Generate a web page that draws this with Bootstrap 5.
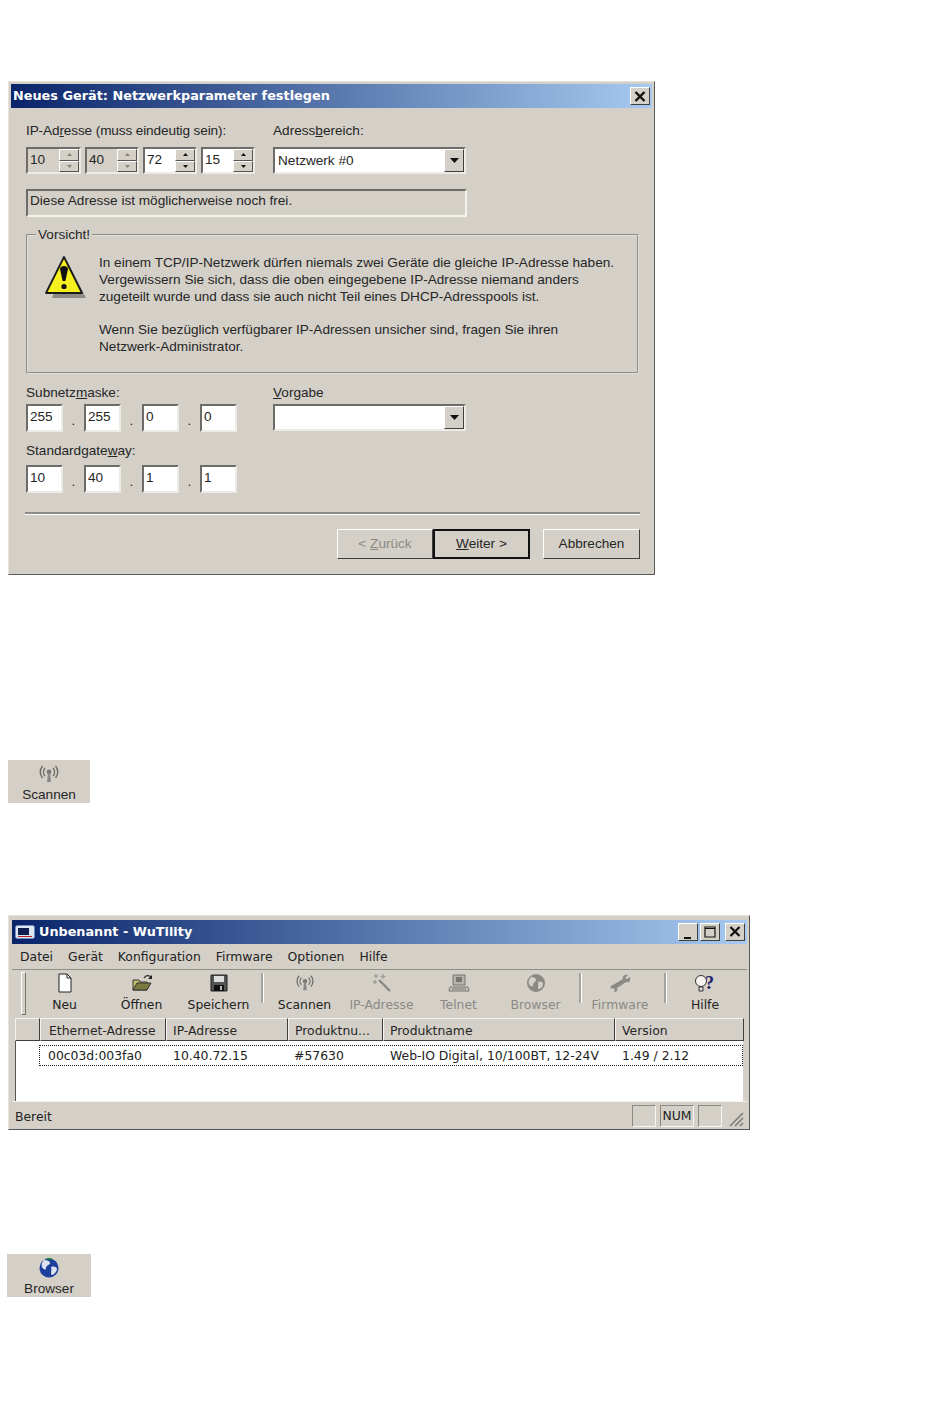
<!DOCTYPE html>
<html lang="de">
<head>
<meta charset="utf-8">
<title>WuTility</title>
<link href="https://cdn.jsdelivr.net/npm/bootstrap@5.3.0/dist/css/bootstrap.min.css" rel="stylesheet">
<style>
body{margin:0;background:#fff;color:#262626;font-family:"Liberation Sans",Arial,sans-serif;font-size:13.6px;line-height:16px}
.sheet{width:950px;height:1402px;overflow:hidden;padding-top:81px}
u{text-decoration:underline}
.dlg{margin-left:8px;width:647px;height:494px;background:#d4d0c8;border:1px solid;border-color:#e6e3dc #5a5a5a #5a5a5a #e6e3dc;padding:2px 2px 0 2px}
.ttl{height:24px;background:linear-gradient(90deg,#0a246a,#a6caf0);color:#fff;font-family:"DejaVu Sans",sans-serif;font-weight:700;font-size:12.85px;padding:0 2px}
.winbtn{width:20px;height:18px;background:#d4d0c8;border:1px solid;border-color:#fff #404040 #404040 #fff;color:#111;flex:none}
.dlgbody{padding:15px 0 0 15px}
.lblcol{width:247px}
.iplbl{letter-spacing:-.12px}
.sp-box{height:27px;background:#fff;border:2px solid;border-color:#6e6c68 #ecebe6 #ecebe6 #6e6c68;padding-left:2px;line-height:21px}
.sp-box.off{background:#d4d0c8}
.ipw{width:55px}.ipx{width:54px}
.ipgap{gap:4px}
.spin{width:20px;height:23px;flex:none}
.spin i{display:flex;align-items:center;justify-content:center;height:11.5px;background:#d4d0c8;border:1px solid;border-color:#fff #555 #555 #fff}
.spin svg{display:block}
.combo{height:27px;background:#fff;border:2px solid;border-color:#6e6c68 #ecebe6 #ecebe6 #6e6c68;width:193px;padding-left:3px;line-height:23px}
.drop{width:20px;height:23px;background:#d4d0c8;border:1px solid;border-color:#fff #404040 #404040 #fff;flex:none}
.stat{margin-top:15px;width:441px;height:28px;border:2px solid;border-color:#6e6c68 #f2f1ec #f2f1ec #6e6c68;padding-left:2px;line-height:20px}
.grp{margin:10px 0 0 0;width:613px;height:147px;border:2px groove #e2e0d9;padding:0;min-width:0}
.grp legend{float:none;width:auto;margin:0 0 0 8px;padding:0 2px;font-size:13.6px;line-height:16px}
.warn{width:71px;padding:12px 0 0 16px;flex:none}
.warntext{padding-top:11px;line-height:17px}
.warntext p{margin:0 0 16px}
.subrow{margin-top:11px}
.tiny{width:37px;height:28px;background:#fff;border:2px solid;border-color:#6e6c68 #ecebe6 #ecebe6 #6e6c68;padding-left:2px;line-height:21px}
.dot{width:21px;height:28px;text-align:center;line-height:34px}
.gap3{margin-top:3px}
.gwlbl{margin-top:11px}
.gwrow{margin-top:6px}
.hr2{height:2px;background:#8d8b86;border-bottom:1px solid #fff;width:615px;margin:19px 0 0 -1px;box-sizing:content-box}
.wb{height:30px;padding:0;font-size:13.6px;line-height:16px;color:#262626;background:#d4d0c8;border:1px solid;border-color:#fff #404040 #404040 #fff;border-radius:0;width:97px}
.wb.dis{color:#8b8984;width:96px}
.wb.def{border:2px solid #111;width:97px}
.btnrow{margin:14px 0 0 311px;width:303px}
.tile{background:#d4d0c8;height:43px;text-align:center;font-size:13.6px;padding-top:3px}
.tile>div{margin-top:2px}
.t1{width:82px;margin:185px 0 0 8px}
.t2{width:84px;margin:0 0 0 7px}
.app{margin:112px 0 124px 8px;width:742px;height:215px;background:#d4d0c8;border:1px solid;border-color:#e6e3dc #555 #555 #e6e3dc;padding:4px 2px 0 3px;font-family:"DejaVu Sans",sans-serif;font-size:12.4px}
.apptl{height:24px;background:linear-gradient(90deg,#0a246a,#a6caf0);color:#fff;font-weight:700;font-size:12.8px;padding:0 2px 0 3px}
.tbtns{gap:2px}
.closeb{margin-left:3px}
.menu{height:27px;gap:15px;padding-left:8px;border-bottom:1px solid #8f8d88;color:#222}
.tbar{height:48px;color:#222}
.grip{width:5px;height:43px;margin:2px 0 0 9px;border:1px solid;border-color:#fff #77756f #77756f #fff;flex:none}
.tb{width:77px;flex:none;text-align:center;padding-top:3px;line-height:16px}
.tb svg{display:block;margin:0 auto 4px;height:20px}
.tb.off{color:#8b8984}
.tb.nar{width:72px}
.vsep{width:2px;height:30px;background:#a5a39d;border-right:1px solid #fff;margin:3px 2px 0 4px;flex:none;box-sizing:content-box}
.vsep.s2{margin-left:5px}
.vsep.s3{margin-left:8px}
.hd{height:23px;margin:0 4px 0 3px;line-height:23px}
.hd>div{background:#d4d0c8;border:1px solid;border-color:#f3f2ee #3f3f3f #3f3f3f #f3f2ee;padding-left:6px;flex:none;overflow:hidden;white-space:nowrap}
.hd>.w1{padding-left:8px}
.lst{height:61px;margin:0 4px 0 3px;background:#fff;border-left:1px solid #555;padding:4px 0 0 23px}
.rw{height:21px;border:1px dotted #222;line-height:19px;color:#222}
.rw>div{flex:none;padding-left:8px;white-space:nowrap}
.sts{height:28px;border-top:1px solid #f3f2ee;padding:3px 3px 0 3px;line-height:24px;color:#222}
.pn{height:22px;border:1px solid;border-color:#8b8984 #f7f6f2 #f7f6f2 #8b8984;text-align:center;line-height:20px;flex:none}
.w0{width:25px}.w1{width:126px}.w2{width:122px}.w3{width:95px}.w4{width:232px}.w5{width:129px}
.r1{width:125px}.r2{width:121px}.r3{width:96px}.r4{width:232px}
.pa{width:24px}.pb{width:34px}
</style>
</head>
<body>
<div class="sheet">

<section class="dlg d-flex flex-column">
  <div class="ttl d-flex align-items-center justify-content-between">
    <span>Neues Gerät: Netzwerkparameter festlegen</span>
    <span class="winbtn d-flex align-items-center justify-content-center">
      <svg width="12" height="11" viewBox="0 0 12 11"><path d="M1.500 1 10.500 10M10.500 1 1.500 10" stroke="#111" stroke-width="2.400"/></svg>
    </span>
  </div>
  <div class="dlgbody">
    <div class="d-flex">
      <div class="lblcol">
        <div class="iplbl">IP-Ad<u>r</u>esse (muss eindeutig sein):</div>
        <div class="d-flex ipgap mt-2">
          <div class="sp-box off ipw d-flex justify-content-between"><span>10</span><span class="spin"><i><svg width="5" height="3"><path d="M2.500 0 5 3H0z" fill="#85837e"/></svg></i><i><svg width="5" height="3"><path d="M0 0h5L2.500 3z" fill="#85837e"/></svg></i></span></div>
          <div class="sp-box off ipx d-flex justify-content-between"><span>40</span><span class="spin"><i><svg width="5" height="3"><path d="M2.500 0 5 3H0z" fill="#85837e"/></svg></i><i><svg width="5" height="3"><path d="M0 0h5L2.500 3z" fill="#85837e"/></svg></i></span></div>
          <div class="sp-box ipx d-flex justify-content-between"><span>72</span><span class="spin"><i><svg width="5" height="3"><path d="M2.500 0 5 3H0z" fill="#111"/></svg></i><i><svg width="5" height="3"><path d="M0 0h5L2.500 3z" fill="#111"/></svg></i></span></div>
          <div class="sp-box ipx d-flex justify-content-between"><span>15</span><span class="spin"><i><svg width="5" height="3"><path d="M2.500 0 5 3H0z" fill="#111"/></svg></i><i><svg width="5" height="3"><path d="M0 0h5L2.500 3z" fill="#111"/></svg></i></span></div>
        </div>
      </div>
      <div>
        <div>Adress<u>b</u>ereich:</div>
        <div class="combo d-flex justify-content-between mt-2"><span>Netzwerk #0</span><span class="drop d-flex align-items-center justify-content-center"><svg width="9" height="5"><path d="M0 0h9L4.500 5z" fill="#111"/></svg></span></div>
      </div>
    </div>
    <div class="stat">Diese Adresse ist möglicherweise noch frei.</div>
    <fieldset class="grp">
      <legend>Vorsicht!</legend>
      <div class="d-flex">
        <div class="warn">
          <svg width="44" height="46" viewBox="0 0 44 46">
            <path d="M23 6 42 43H8z" fill="#8d8b86"/>
            <path d="M20 2 38 38H2z" fill="#f6f01e" stroke="#1a1a1a" stroke-width="1.800" stroke-linejoin="round"/>
            <path d="M16 14c0-4 8-4 8 0l-2.600 12h-2.800z" fill="#111"/>
            <circle cx="20" cy="31.500" r="2.600" fill="#111"/>
          </svg>
        </div>
        <div class="warntext">
          <p>In einem TCP/IP-Netzwerk dürfen niemals zwei Geräte die gleiche IP-Adresse haben.<br>Vergewissern Sie sich, dass die oben eingegebene IP-Adresse niemand anders<br>zugeteilt wurde und dass sie auch nicht Teil eines DHCP-Adresspools ist.</p>
          <p>Wenn Sie bezüglich verfügbarer IP-Adressen unsicher sind, fragen Sie ihren<br>Netzwerk-Administrator.</p>
        </div>
      </div>
    </fieldset>
    <div class="d-flex subrow">
      <div class="lblcol">
        <div>Subnetz<u>m</u>aske:</div>
        <div class="d-flex gap3"><div class="tiny">255</div><div class="dot">.</div><div class="tiny">255</div><div class="dot">.</div><div class="tiny">0</div><div class="dot">.</div><div class="tiny">0</div></div>
      </div>
      <div>
        <div><u>V</u>orgabe</div>
        <div class="combo d-flex justify-content-end gap3"><span class="drop d-flex align-items-center justify-content-center"><svg width="9" height="5"><path d="M0 0h9L4.500 5z" fill="#111"/></svg></span></div>
      </div>
    </div>
    <div class="gwlbl">Standardgate<u>w</u>ay:</div>
    <div class="d-flex gwrow"><div class="tiny">10</div><div class="dot">.</div><div class="tiny">40</div><div class="dot">.</div><div class="tiny">1</div><div class="dot">.</div><div class="tiny">1</div></div>
    <div class="hr2"></div>
    <div class="d-flex btnrow">
      <button class="btn wb dis" type="button">&lt; <u>Z</u>urück</button>
      <button class="btn wb def" type="button"><u>W</u>eiter &gt;</button>
      <button class="btn wb ms-auto" type="button">Abbrechen</button>
    </div>
  </div>
</section>

<div class="tile t1">
  <svg class="d-block mx-auto" width="24" height="22" viewBox="0 0 24 22"><g fill="none" stroke="#6d6c68" stroke-width="1.400"><path d="M8 5C6 7.500 6 11 8 13M16 5c2 2.500 2 6 0 8M5.500 3C2.500 6.500 2.500 11.500 5.500 15M18.500 3c3 3.500 3 8.500 0 12"/></g><circle cx="12" cy="9" r="2.400" fill="#777"/><path d="M11 10h2l1 9h-4z" fill="#888"/></svg>
  <div>Scannen</div>
</div>

<section class="app d-flex flex-column">
  <div class="apptl d-flex align-items-center">
    <svg width="20" height="14" viewBox="0 0 20 14" class="me-1 flex-shrink-0"><rect x=".5" y=".5" width="19" height="13" rx="2" fill="#dfe7f5" stroke="#6f8dc0"/><rect x="3" y="3" width="11" height="7" fill="#10204e"/><rect x="3" y="11" width="14" height="1" fill="#b22"/></svg>
    <span>Unbenannt - WuTility</span>
    <span class="d-flex ms-auto tbtns">
      <span class="winbtn d-flex align-items-end justify-content-center"><svg width="10" height="12"><path d="M1 9h7v2H1z" fill="#111"/></svg></span>
      <span class="winbtn d-flex align-items-center justify-content-center"><svg width="12" height="12"><path d="M1 1h10v10H1zM1.500 2.500h9" fill="none" stroke="#111" stroke-width="1.200"/></svg></span>
      <span class="winbtn d-flex align-items-center justify-content-center closeb"><svg width="12" height="11" viewBox="0 0 12 11"><path d="M1.500 1 10.500 10M10.500 1 1.500 10" stroke="#111" stroke-width="2.200"/></svg></span>
    </span>
  </div>
  <nav class="menu d-flex align-items-center">
    <span>Datei</span><span>Gerät</span><span>Konfiguration</span><span>Firmware</span><span>Optionen</span><span>Hilfe</span>
  </nav>
  <div class="tbar d-flex">
    <div class="grip"></div>
    <div class="tb"><svg width="20" height="20" viewBox="0 0 20 20"><path d="M4 1h8l4 4v14H4z" fill="#fff" stroke="#222"/><path d="M12 1v4h4" fill="none" stroke="#222"/></svg>Neu</div>
    <div class="tb"><svg width="24" height="20" viewBox="0 0 24 20"><path d="M3 7h6l1 2h7v8H3z" fill="#c4bf6d" stroke="#333"/><path d="M3 17 7 10h14l-4 7z" fill="#7d7a3f" stroke="#333"/><path d="M14 5c2-3 5-3 7-1" fill="none" stroke="#222" stroke-width="1.300"/><path d="M22 2v4h-4z" fill="#222"/></svg>Öffnen</div>
    <div class="tb"><svg width="20" height="20" viewBox="0 0 20 20"><path d="M2 2h16v16H2z" fill="#555" stroke="#222"/><path d="M5 3h10v6H5z" fill="#ddd"/><path d="M5 12h10v6H5z" fill="#111"/><path d="M11 13h2v4h-2z" fill="#bbb"/></svg>Speichern</div>
    <div class="vsep"></div>
    <div class="tb"><svg width="24" height="20" viewBox="0 0 24 22"><g fill="none" stroke="#6d6c68" stroke-width="1.400"><path d="M8 5C6 7.500 6 11 8 13M16 5c2 2.500 2 6 0 8M5.500 3C2.500 6.500 2.500 11.500 5.500 15M18.500 3c3 3.500 3 8.500 0 12"/></g><circle cx="12" cy="9" r="2.400" fill="#777"/><path d="M11 10h2l1 9h-4z" fill="#888"/></svg>Scannen</div>
    <div class="tb off"><svg width="24" height="20" viewBox="0 0 24 20"><path d="M9 7 20 18" stroke="#8a8984" stroke-width="2.400"/><path d="M6 1v4M4 3h4M13 1v5M10.500 3.500h5M3 9h4M5 7v4" stroke="#a09e98" stroke-width="1.300"/></svg>IP-Adresse</div>
    <div class="tb off"><svg width="24" height="20" viewBox="0 0 24 20"><path d="M6 2h12v10H6z" fill="#b5b3ad" stroke="#77756f"/><path d="M9 4h6v5H9z" fill="#77756f"/><path d="M3 14h18l1 4H2z" fill="#c8c6c0" stroke="#77756f"/><path d="M5 16h14" stroke="#77756f"/></svg>Telnet</div>
    <div class="tb off"><svg width="24" height="20" viewBox="0 0 24 20"><circle cx="12" cy="10" r="9" fill="#8b8984"/><path d="M7 4c3 0 5 1 5 3s-3 2-3 5-3 1-4-1 0-5 2-7zM14 9c3-1 5 0 5 2s-2 5-4 5 0-4-1-7z" fill="#d4d0c8"/></svg>Browser</div>
    <div class="vsep s2"></div>
    <div class="tb off nar"><svg width="24" height="20" viewBox="0 0 24 20"><path d="M20 2c-3-1-6 1-5 4L5 12c-2 0-3 2-2 4l2-1 2 2-1 2c3 0 4-2 3-4l9-6c3 1 5-1 4-5l-3 2-2-1z" fill="#8b8984"/></svg>Firmware</div>
    <div class="vsep s3"></div>
    <div class="tb nar"><svg width="28" height="20" viewBox="0 0 28 20"><circle cx="10" cy="8" r="5.500" fill="#f4f3ee" stroke="#333"/><path d="M8 14h4v4H8z" fill="#ddd" stroke="#333"/><text x="14" y="16" font-family="Liberation Serif,serif" font-weight="700" font-size="18" fill="#1d1d6b">?</text></svg>Hilfe</div>
  </div>
  <div class="hd d-flex">
    <div class="w0"></div>
    <div class="w1">Ethernet-Adresse</div>
    <div class="w2">IP-Adresse</div>
    <div class="w3">Produktnu...</div>
    <div class="w4">Produktname</div>
    <div class="w5">Version</div>
  </div>
  <div class="lst">
    <div class="rw d-flex">
      <div class="r1">00c03d:003fa0</div>
      <div class="r2">10.40.72.15</div>
      <div class="r3">#57630</div>
      <div class="r4">Web-IO Digital, 10/100BT, 12-24V</div>
      <div>1.49 / 2.12</div>
    </div>
  </div>
  <div class="sts d-flex">
    <span>Bereit</span>
    <span class="d-flex ms-auto gap-1 align-items-start">
      <span class="pn pa"></span>
      <span class="pn pb">NUM</span>
      <span class="pn pa"></span>
      <svg width="18" height="18" viewBox="0 0 18 18" class="mt-1"><path d="M4 17 17 4M9 17 17 9M14 17l3-3" stroke="#777" stroke-width="1.500"/></svg>
    </span>
  </div>
</section>

<div class="tile t2">
  <svg class="d-block mx-auto" width="22" height="22" viewBox="0 0 22 22"><circle cx="11" cy="11" r="9.500" fill="#1d3f9c"/><path d="M6 3c3 0 6 1 6 3s-4 2-4 5-3 1-4-1 0-5 2-7zM13 10c3-1 6 0 6 2s-3 6-5 6 0-5-1-8z" fill="#d9e2ee"/><path d="M7 2c2-1.500 6-1.500 8 0l-3 1z" fill="#1a7a3a"/></svg>
  <div>Browser</div>
</div>

</div>
<script src="https://cdn.jsdelivr.net/npm/bootstrap@5.3.0/dist/js/bootstrap.bundle.min.js"></script>
</body>
</html>
